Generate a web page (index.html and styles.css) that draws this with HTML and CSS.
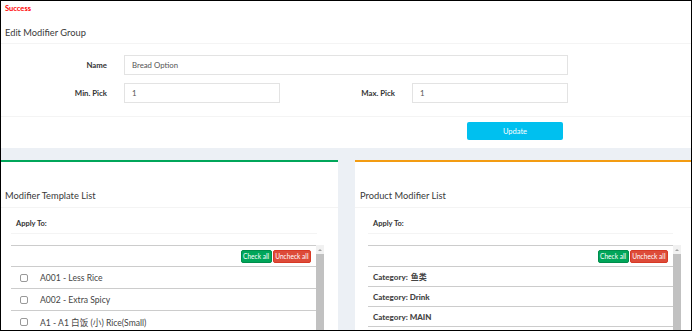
FILE: index.html
```html
<!DOCTYPE html>
<html lang="en">
  <head>
    <meta charset="UTF-8" />
    <title>Edit Modifier Group</title>
    <link rel="stylesheet" href="styles.css">
  </head>
  <body>
    <div class="frame">
      <div class="alert">Success</div>
      <section class="group">
        <h3 class="group-title">Edit Modifier Group</h3>
        <form class="group-form">
          <label>Name</label>
          <input class="wide" value="Bread Option" />
          <label>Min. Pick</label>
          <input value="1" />
          <label>Max. Pick</label>
          <input value="1" />
        </form>
        <div class="group-footer">
          <button class="btn-update">Update</button>
        </div>
      </section>
      <div class="lists">
        <section class="box green">
          <h3 class="box-title">Modifier Template List</h3>
          <div class="box-body">
            <h4>Apply To:</h4>
            <div class="table">
              <div class="rows">
                <div class="row tools">
                  <button class="btn check">Check all</button>
                  <button class="btn uncheck">Uncheck all</button>
                </div>
                <div class="row item"><i class="cb"></i>A001 - Less Rice</div>
                <div class="row item"><i class="cb"></i>A002 - Extra Spicy</div>
                <div class="row item"><i class="cb"></i>A1 - A1 白饭 (小) Rice(Small)</div>
                <div class="row item"><i class="cb"></i>A2 - A2 白饭 (大) Rice(Large)</div>
              </div>
              <div class="scrollbar"><i class="arrow"></i><i class="thumb"></i></div>
            </div>
          </div>
        </section>
        <section class="box orange">
          <h3 class="box-title">Product Modifier List</h3>
          <div class="box-body">
            <h4>Apply To:</h4>
            <div class="table">
              <div class="rows">
                <div class="row tools">
                  <button class="btn check">Check all</button>
                  <button class="btn uncheck">Uncheck all</button>
                </div>
                <div class="row cat"><b>Category:</b> 鱼类</div>
                <div class="row cat"><b>Category: Drink</b></div>
                <div class="row cat"><b>Category: MAIN</b></div>
                <div class="row cat"><b>Category: SIDE</b></div>
              </div>
              <div class="scrollbar"><i class="arrow"></i><i class="thumb"></i></div>
            </div>
          </div>
        </section>
      </div>
    </div>
  </body>
</html>
```

FILE: styles.css
```css
* {
  box-sizing: border-box;
}
body {
  margin: 0;
  background: #fff;
  font-family: Lato, "Noto Sans CJK SC", sans-serif;
  color: #333;
  font-size: 8px;
}
.frame {
  width: 692px;
  height: 331px;
  border: 1px solid #000;
  overflow: hidden;
}
.alert {
  color: #f00;
  font-weight: 700;
  font-size: 7.5px;
  padding: 3px 4px 0;
  height: 18px;
}
h3 {
  margin: 0;
  font-weight: 400;
  font-size: 9.3px;
  color: #3a3a3a;
}
.group-title {
  padding: 8px 4px 0;
  height: 25px;
  border-bottom: 1px solid #f4f4f4;
}
.group-form {
  display: grid;
  grid-template-columns: 106px 156px 98px 156px;
  column-gap: 17px;
  row-gap: 8px;
  align-items: center;
  padding: 11px 0 13px;
  border-bottom: 1px solid #f4f4f4;
  label {
    text-align: right;
    font-weight: 700;
    font-size: 7.8px;
    color: #333;
  }
  input {
    height: 20px;
    border: 1px solid #e3e3e3;
    padding: 0 7px;
    font-family: inherit;
    font-size: 7.8px;
    color: #555;
  }
  .wide {
    grid-column: 2 / 5;
  }
}
.group-footer {
  display: flex;
  justify-content: flex-end;
  padding: 5px 128px 8px 0;
}
.btn-update {
  width: 96px;
  height: 18px;
  border: 0;
  border-radius: 2px;
  background: #00c0ef;
  color: #fff;
  font-family: inherit;
  font-size: 7.5px;
}
.lists {
  background: #ecf0f5;
  display: grid;
  grid-template-columns: 337px 1fr;
  column-gap: 17px;
  padding-top: 12px;
}
.box {
  background: #fff;
  border-top: 2px solid;
  &.green {
    border-color: #00a65a;
  }
  &.orange {
    border-color: #f39c12;
  }
}
.box-title {
  padding: 28px 4px 0;
  height: 46px;
  border-bottom: 1px solid #f4f4f4;
}
.orange .box-title {
  padding-left: 5px;
}
.box-body {
  padding: 0 0 0 10px;
  h4 {
    margin: 0 21px 0 0;
    padding: 11px 5px 0;
    height: 26px;
    border-bottom: 1px solid #f4f4f4;
    font-size: 7.5px;
    font-weight: 700;
    color: #333;
  }
}
.orange .box-body {
  padding-left: 13px;
  h4 {
    margin-right: 18px;
  }
}
.table {
  margin-top: 11px;
  display: flex;
  width: 313px;
  height: 140px;
}
.rows {
  flex-grow: 1;
  border-top: 1px solid #ccc;
}
.scrollbar {
  width: 8px;
  background: #f1f1f1;
  display: flex;
  flex-direction: column;
  align-items: center;
  .arrow {
    margin: 4px 0 3px;
    border: 2px solid transparent;
    border-top: 0;
    border-bottom: 2px solid #a3a3a3;
  }
  .thumb {
    align-self: stretch;
    flex-grow: 1;
    background: #c1c1c1;
  }
}
.row {
  border-bottom: 1px solid #ccc;
  display: flex;
  align-items: center;
}
.tools {
  justify-content: flex-end;
  gap: 1px;
  height: 21px;
  padding-right: 5px;
}
.btn {
  height: 13px;
  border: 1px solid transparent;
  border-radius: 2px;
  padding: 0 1.5px;
  color: #fff;
  font-family: inherit;
  font-size: 6.6px;
  &.check {
    background: #00a65a;
    border-color: #008d4c;
  }
  &.uncheck {
    background: #dd4b39;
    border-color: #d73925;
  }
}
.item {
  height: 22px;
  color: #444;
  font-size: 8.6px;
}
.cb {
  width: 8px;
  height: 8px;
  border: 1px solid #999;
  border-radius: 2px;
  margin: 0 12px 0 9px;
}
.cat {
  height: 20px;
  padding-left: 5px;
  color: #444;
  font-weight: 700;
  b {
    margin-right: 3px;
  }
}
```
